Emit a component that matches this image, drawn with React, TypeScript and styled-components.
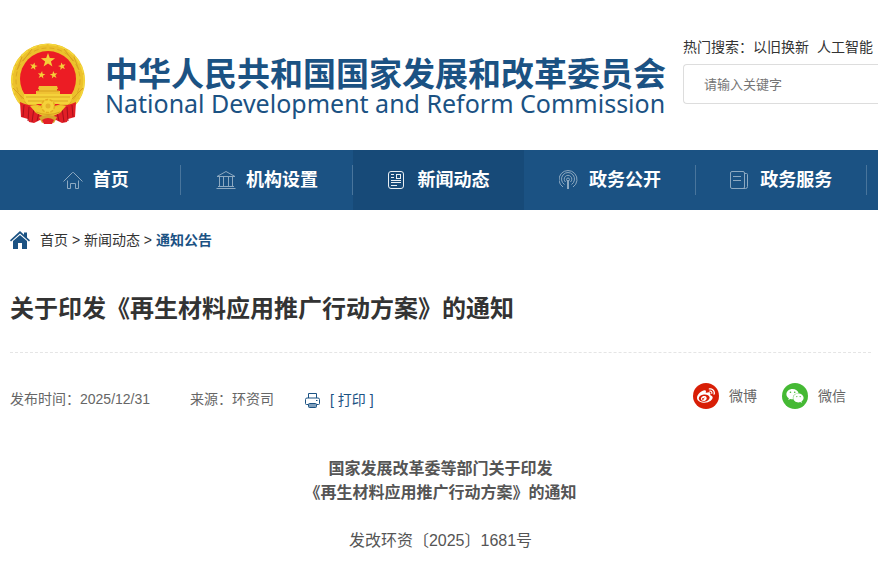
import React from "react";
import styled, { createGlobalStyle } from "styled-components";
import { FaWeibo, FaWeixin } from "react-icons/fa";

const blue = "#1b5283";
const activeBlue = "#174a78";

const GlobalStyle = createGlobalStyle`
  * { box-sizing: border-box; }
  body {
    margin: 0;
    background: #fff;
    color: #333;
    font-family: "Liberation Sans", "Noto Sans CJK SC", sans-serif;
    font-size: 14px;
    line-height: 20px;
    overflow-x: hidden;
  }
  a { color: inherit; text-decoration: none; }
  h1, p { margin: 0; }
`;

const Header = styled.header`
  display: flex;
  align-items: flex-start;
  min-height: 150px;
  padding-left: 10px;
`;

const Brand = styled.a`
  display: flex;
  flex: none;
  gap: 19px;
  padding-top: 42px;
  color: ${blue};
`;

const Emblem = styled.svg`
  width: 76px;
  height: 83px;
`;

const BrandText = styled.span`
  display: flex;
  flex-direction: column;
  gap: 4px;
  padding-top: 14px;
  white-space: nowrap;
`;

const BrandName = styled.span`
  font-family: "Noto Sans CJK SC", sans-serif;
  font-size: 33px;
  font-weight: 700;
  line-height: 32px;
`;

const BrandSub = styled.span`
  font-family: "Noto Sans", sans-serif;
  font-size: 25px;
  line-height: 22px;
`;

const Search = styled.form`
  flex: 1;
  min-width: 0;
  padding-top: 37px;
  margin-left: 17px;
`;

const HotWords = styled.div`
  display: flex;
  white-space: nowrap;
`;

const HotLink = styled.a`
  margin-right: 8px;
`;

const SearchInput = styled.input`
  display: block;
  width: 100%;
  height: 40px;
  margin-top: 7px;
  padding: 0 20px;
  border: 1px solid #ddd;
  border-right: 0;
  border-radius: 4px 0 0 4px;
  background: #fff;
  color: #333;
  font-family: inherit;
  font-size: 13px;
  &::placeholder { color: #757575; opacity: 1; }
`;

const Nav = styled.nav`
  display: flex;
  padding: 0 11px 0 10px;
  background: ${blue};
`;

const NavItem = styled.a<{ $active?: boolean; $divided?: boolean }>`
  position: relative;
  display: flex;
  flex: 1 1 0;
  align-items: center;
  justify-content: center;
  gap: 10px;
  height: 60px;
  background: ${(p) => (p.$active ? activeBlue : "transparent")};
  color: #fff;
  font-size: 18px;
  font-weight: 700;
  line-height: 20px;
  white-space: nowrap;
  &::after {
    content: "";
    display: ${(p) => (p.$divided ? "block" : "none")};
    position: absolute;
    top: 15px;
    right: 0;
    width: 1px;
    height: 30px;
    background: #49759c;
  }
`;

const NavIcon = styled.svg<{ $active?: boolean }>`
  width: 20px;
  height: 20px;
  fill: none;
  stroke: ${(p) => (p.$active ? "#e8eef3" : "#8da9c1")};
  stroke-width: 1;
`;

const Main = styled.main`
  padding: 0 7px 0 10px;
`;

const Breadcrumb = styled.nav`
  display: flex;
  align-items: center;
  height: 60px;
  white-space: pre;
`;

const HomeIcon = styled.svg`
  width: 20px;
  height: 18px;
  margin-right: 10px;
  fill: ${blue};
`;

const Current = styled.strong`
  color: ${blue};
`;

const Title = styled.h1`
  padding: 21px 0 25px;
  border-bottom: 1px dashed #e5e5e5;
  font-size: 24px;
  font-weight: 700;
  line-height: 36px;
`;

const Meta = styled.div`
  display: flex;
  align-items: flex-start;
  padding-top: 30px;
  color: #666;
  white-space: nowrap;
`;

const Published = styled.span`
  width: 180px;
  padding-top: 6px;
`;

const Source = styled.span`
  padding-top: 6px;
`;

const PrintButton = styled.button`
  display: flex;
  align-items: center;
  gap: 10px;
  margin: 7px 0 0 31px;
  padding: 0;
  border: 0;
  background: none;
  color: ${blue};
  font: inherit;
  cursor: pointer;
`;

const PrintIcon = styled.svg`
  width: 15px;
  height: 16px;
`;

const Share = styled.div`
  display: flex;
  gap: 25px;
  margin-left: auto;
  padding-right: 25px;
`;

const ShareLink = styled.a`
  display: flex;
  align-items: center;
  gap: 10px;
`;

const ShareBadge = styled.span<{ $color: string }>`
  display: flex;
  align-items: center;
  justify-content: center;
  width: 26px;
  height: 26px;
  border-radius: 50%;
  background: ${(p) => p.$color};
  color: #fff;
  font-size: 18px;
`;

const Article = styled.article`
  padding: 47px 0 16px;
  color: #555;
  font-size: 16px;
  line-height: 24px;
  text-align: center;
`;

const Heading = styled.p`
  margin-bottom: 24px;
  font-weight: 700;
`;

const star = (cx: number, cy: number, r: number, turn = 0) =>
  Array.from({ length: 10 }, (_, i) => {
    const a = ((i * 36 - 90 + turn) * Math.PI) / 180;
    const d = i % 2 ? r * 0.4 : r;
    return `${(cx + d * Math.cos(a)).toFixed(1)},${(cy + d * Math.sin(a)).toFixed(1)}`;
  }).join(" ");

const NationalEmblem = () => (
  <Emblem viewBox="0 0 76 83" aria-hidden="true">
    <circle cx="38" cy="38.500" r="37" fill="#ecc12c" />
    <circle cx="38" cy="38.500" r="36" fill="none" stroke="#f5d83c" strokeWidth="1.500" strokeDasharray="8 2" />
    <circle cx="38" cy="38" r="32" fill="none" stroke="#dba922" strokeWidth="1" strokeDasharray="5 3" />
    <path d="M12 15 7 28M64 15l5 13M3 46l12 12M73 46 61 58M22 7l-9 12M54 7l9 12" stroke="#d8a020" fill="none" />
    <circle cx="38" cy="37" r="28" fill="#ec1c24" />
    <g fill="#f5cf38">
      <polygon points={star(38, 18.5, 7.5)} />
      <polygon points={star(23.7, 24.3, 4, 12)} />
      <polygon points={star(52, 24.3, 4, -12)} />
      <polygon points={star(31.5, 33, 4, 8)} />
      <polygon points={star(43.7, 33, 4, -8)} />
    </g>
    <path d="M29 44h18l1 3H28zM29 47h18v2h3v4H26v-4h3z" fill="#f0c233" />
    <path d="M27 49h22" stroke="#d8a020" />
    <path d="M14 52h48v5l-3 5H17l-3-5z" fill="#f5d23a" />
    <path d="M16 55h44M18 59h40" stroke="#dba922" />
    <path d="M10 60q8 4 18 4l8 8v8l-6-2-6 3-5-1-1-3-7-2Z" fill="#e21f26" />
    <path d="M66 60q-8 4-18 4l-8 8v8l6-2 6 3 5-1 1-3 7-2Z" fill="#e21f26" />
    <path d="M14 63l-1 12M19 65l-1 14M24 66l-2 14M29 70l-2 9M62 63l1 12M57 65l1 14M52 66l2 14M47 70l2 9" stroke="#a80f1b" fill="none" />
    <path d="M20 64q9-2 13 3h10q4-5 13-3l-6 7q-12 7-24 0Z" fill="#f0c82f" />
    <circle cx="38" cy="64" r="6.500" fill="#f5d23a" stroke="#e5ac20" strokeWidth="1.500" strokeDasharray="3 1.500" />
    <circle cx="38" cy="64" r="2.500" fill="#e6b32a" />
    <path d="M26 70q12 5 24 0" stroke="#d8a020" fill="none" />
    <path d="M29 75q9-4 18 0l-3 6-6-2-6 2Z" fill="#d5a72c" />
    <path d="M32 78q6-4 12 0l-2 4h-8Z" fill="#e21f26" />
  </Emblem>
);

const navItems = [
  {
    label: "首页",
    icon: <path d="M.5 11.500 9.500 2.500h1l9 9M4.500 10.500v8h3v-5h5v5h3v-8" />,
  },
  {
    label: "机构设置",
    icon: <path d="M.5 18.500h19M2 16.500h16M1 6.500 10 1.500l9 5zM3.500 6.500v10M7.500 6.500v10M12.500 6.500v10M16.500 6.500v10" />,
  },
  {
    label: "新闻动态",
    active: true,
    icon: (
      <>
        <rect x=".5" y="1.500" width="15" height="17" rx="2.500" />
        <path d="M3 4.500h3M3 7.500h3M3 10.500h10M3 12.500h10M3 15.500h6" />
        <rect x="8.500" y="4.500" width="4" height="4" />
      </>
    ),
  },
  {
    label: "政务公开",
    icon: (
      <>
        <path d="M4 17a9 9 0 1 1 10 0M5.500 14.500a6.500 6.500 0 1 1 7 0M6.500 12a3.800 3.800 0 1 1 5 0" />
        <circle cx="9" cy="9.500" r="1.500" />
        <path d="M9 10v9" strokeWidth="2" />
      </>
    ),
  },
  {
    label: "政务服务",
    icon: (
      <>
        <rect x=".5" y="1.500" width="14" height="17" rx="1.500" />
        <path d="M3 6.500h8M3 10.500h8M14.500 3.500h2q1 0 1 1v12q0 2-2 2h-3" />
      </>
    ),
  },
];

export default function App() {
  return (
    <>
      <GlobalStyle />
      <Header>
        <Brand href="#">
          <NationalEmblem />
          <BrandText>
            <BrandName>中华人民共和国国家发展和改革委员会</BrandName>
            <BrandSub>National Development and Reform Commission</BrandSub>
          </BrandText>
        </Brand>
        <Search role="search">
          <HotWords>
            热门搜索：
            <HotLink href="#">以旧换新</HotLink>
            <HotLink href="#">人工智能</HotLink>
          </HotWords>
          <SearchInput type="text" placeholder="请输入关键字" aria-label="请输入关键字" />
        </Search>
      </Header>

      <Nav>
        {navItems.map(({ label, icon, active }) => (
          <NavItem key={label} href="#" $active={active} $divided={!active}>
            <NavIcon viewBox="0 0 20 20" $active={active} aria-hidden="true">
              {icon}
            </NavIcon>
            {label}
          </NavItem>
        ))}
      </Nav>

      <Main>
        <Breadcrumb>
          <HomeIcon viewBox="0 0 20 18" aria-hidden="true">
            <path d="M10 0 14 3.700V1.500h3v5L20 9.300l-1 1.200L10 2.500l-9 8L0 9.300Z" />
            <path d="m10 4 7 6v8h-5v-6H8v6H3v-8Z" />
          </HomeIcon>
          <a href="#">首页</a>
          {" > "}
          <a href="#">新闻动态</a>
          {" > "}
          <Current>通知公告</Current>
        </Breadcrumb>

        <Title>关于印发《再生材料应用推广行动方案》的通知</Title>

        <Meta>
          <Published>发布时间：2025/12/31</Published>
          <Source>来源：环资司</Source>
          <PrintButton type="button">
            <PrintIcon viewBox="0 0 15 16" fill="none" stroke={blue} aria-hidden="true">
              <path d="M3.500 6V1.500h8V6M3.500 12.500h-2q-1 0-1-1v-4q0-1.500 1.500-1.500h11q1.500 0 1.500 1.500v4q0 1-1 1h-2M11 8.500h1.500" />
              <rect x="3.500" y="11.500" width="8" height="4" rx="1" fill="#7f9fbc" />
            </PrintIcon>
            [ 打印 ]
          </PrintButton>
          <Share>
            <ShareLink href="#">
              <ShareBadge $color="#d81e06">
                <FaWeibo aria-hidden="true" />
              </ShareBadge>
              微博
            </ShareLink>
            <ShareLink href="#">
              <ShareBadge $color="#45b934">
                <FaWeixin aria-hidden="true" />
              </ShareBadge>
              微信
            </ShareLink>
          </Share>
        </Meta>

        <Article>
          <Heading>
            国家发展改革委等部门关于印发
            <br />
            《再生材料应用推广行动方案》的通知
          </Heading>
          <p>发改环资〔2025〕1681号</p>
        </Article>
      </Main>
    </>
  );
}
